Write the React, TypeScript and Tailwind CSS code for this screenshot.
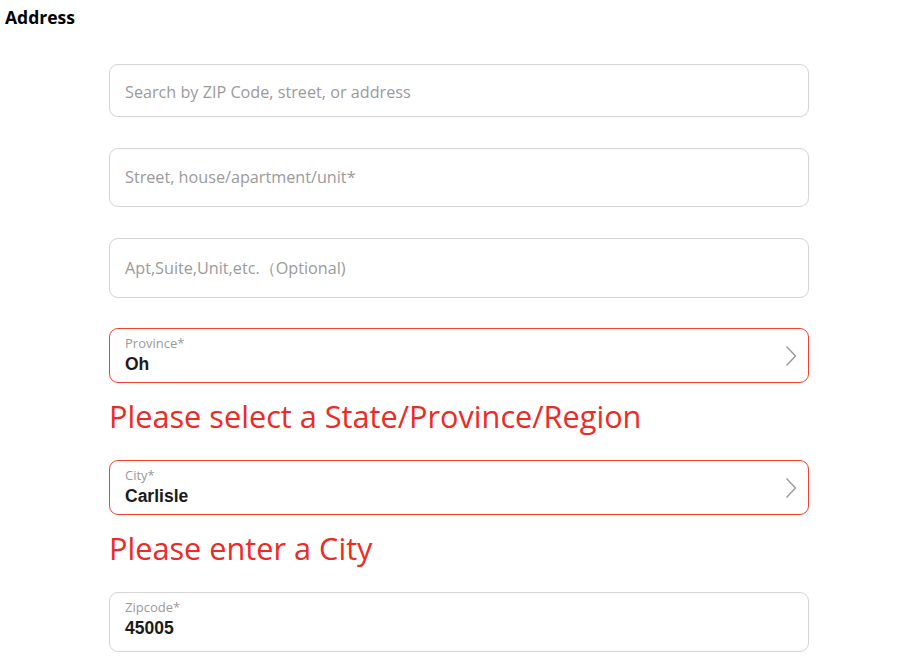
const openSans = "font-['Open_Sans',sans-serif]";

function Chevron() {
  return (
    <svg width="12" height="22" viewBox="0 0 12 22" fill="none" className="-mr-[4px] self-center">
      <polyline points="1.5,1.5 10.5,11 1.5,20.5" stroke="#9a9a9a" strokeWidth="1.4" />
    </svg>
  );
}

function PlainField({ placeholder, h, pt = "" }: { placeholder: string; h: string; pt?: string }) {
  return (
    <div className={`${h} ${pt} w-[700px] rounded-[9px] border border-[#d4d4d4] flex items-center px-[15px]`}>
      <span className={`${openSans} text-[16.2px] text-[#9a9a9a]`}>{placeholder}</span>
    </div>
  );
}

function ValueField({ label, value, error, chevron, h }: {
  label: string; value: string; error?: boolean; chevron?: boolean; h: string;
}) {
  return (
    <div className={`${h} w-[700px] rounded-[9px] border ${error ? "border-[#f0402e]" : "border-[#d4d4d4]"} flex px-[15px]`}>
      <div className="flex-1 flex flex-col pt-[6px]">
        <span className={`${openSans} text-[13px] leading-[17px] text-[#9a9a9a]`}>{label}</span>
        <span className="font-['Liberation_Sans',Arial,sans-serif] font-bold text-[17.5px] leading-[25px] text-[#1a1a1a]">{value}</span>
      </div>
      {chevron && <Chevron />}
    </div>
  );
}

function ErrorText({ children }: { children: string }) {
  return (
    <div className="h-[77px] pt-[18px]">
      <div className={`${openSans} text-[30.7px] leading-none text-[#ee2a24]`}>{children}</div>
    </div>
  );
}

export default function App() {
  return (
    <div className="bg-white w-[909px] h-[671px] overflow-hidden">
      <div className={`${openSans} font-bold text-[17.5px] leading-[24px] pl-[5px] pt-[5px] text-black`}>Address</div>
      <div className="flex flex-col pl-[109px] pt-[35px]">
        <PlainField h="h-[53px]" pt="pt-[4px]" placeholder="Search by ZIP Code, street, or address" />
        <div className="h-[31px]" />
        <PlainField h="h-[59px]" placeholder="Street, house/apartment/unit*" />
        <div className="h-[31px]" />
        <PlainField h="h-[60px]" placeholder="Apt,Suite,Unit,etc.（Optional)" />
        <div className="h-[30px]" />
        <ValueField h="h-[55px]" label="Province*" value="Oh" error chevron />
        <ErrorText>Please select a State/Province/Region</ErrorText>
        <ValueField h="h-[55px]" label="City*" value="Carlisle" error chevron />
        <ErrorText>Please enter a City</ErrorText>
        <ValueField h="h-[60px]" label="Zipcode*" value="45005" />
      </div>
    </div>
  );
}
